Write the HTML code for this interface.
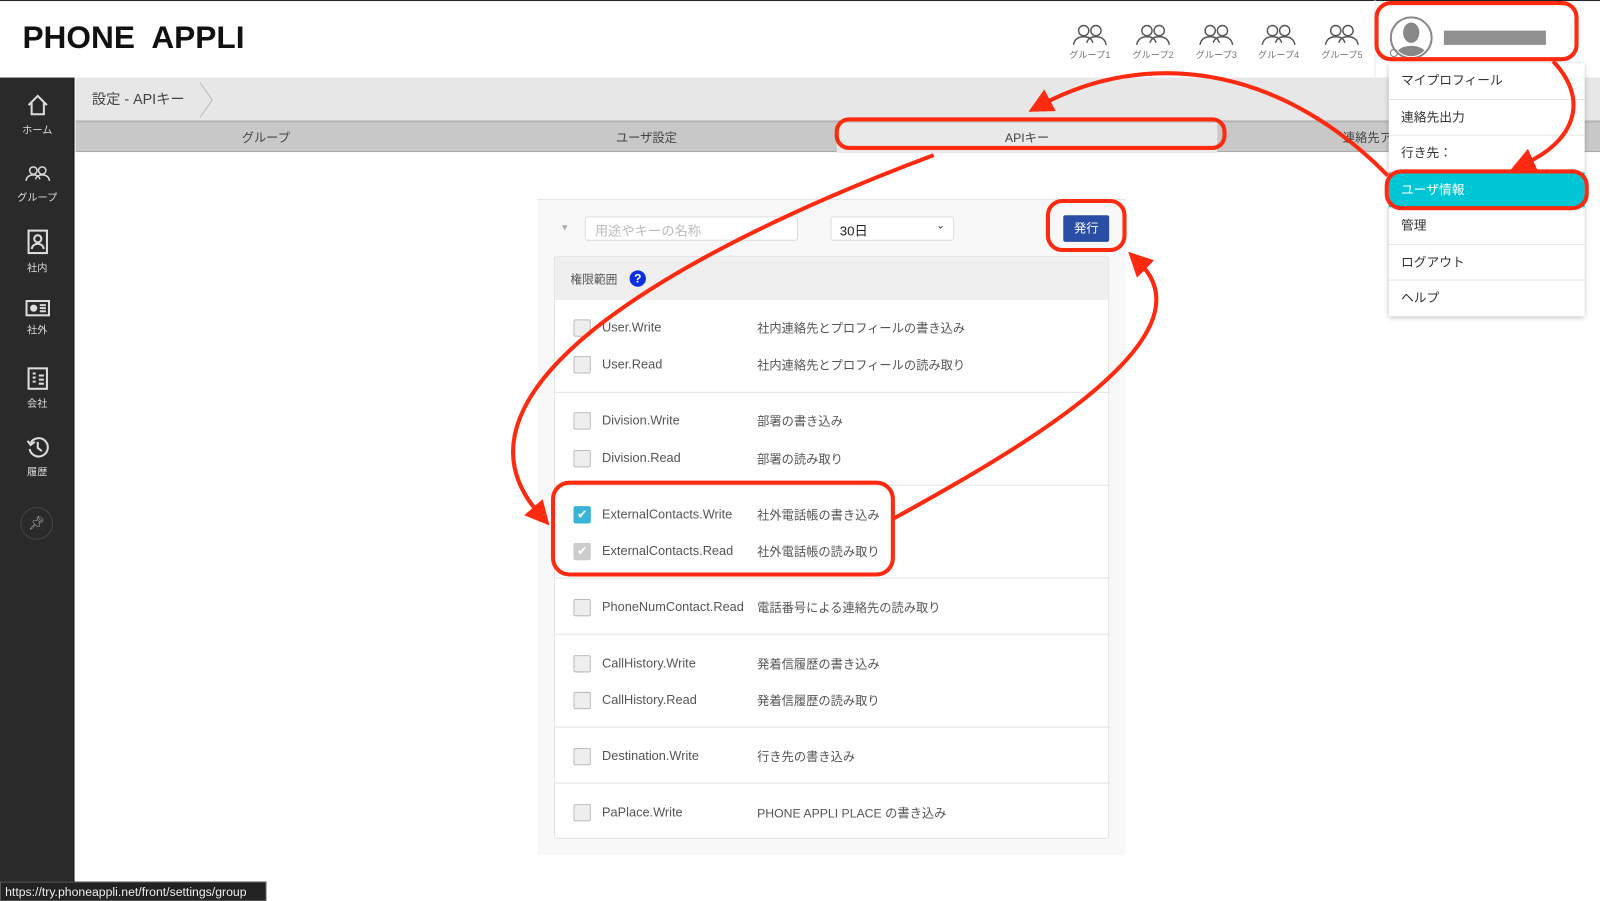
<!DOCTYPE html>
<html><head><meta charset="utf-8"><style>
*{margin:0;padding:0;box-sizing:border-box}
html,body{width:1600px;height:901px;overflow:hidden;background:#fff}
body{font-family:"Liberation Sans","Noto Sans CJK JP",sans-serif;color:#444}
#w{position:absolute;left:0;top:0;width:1568px;height:883px;transform:scale(1.020408);transform-origin:0 0;background:#fff}
.a{position:absolute}
.sb{left:0;top:76px;width:73px;height:807px;background:#2a2a2a;border-right:1px solid #111}
.si{position:absolute;left:0;width:73px;text-align:center;color:#ddd;font-size:10px}
.si svg{display:block;margin:0 auto 4px}
.tab{position:absolute;top:0;height:30px;line-height:30px;font-size:12px;color:#444;text-align:center;width:373px}
.grp{position:absolute;top:22px;width:50px;text-align:center;font-size:9px;color:#777}
.grp svg{display:block;margin:0 auto 1px}
.dd{left:1361px;top:62px;width:192px;height:248px;background:#fff;box-shadow:0 1px 5px rgba(0,0,0,.3)}
.di{height:35.5px;line-height:35px;padding-left:12px;font-size:12.5px;color:#333;border-bottom:1px solid #e5e5e5}
.row{position:absolute;left:0;width:544px;font-size:12.5px;color:#555}
.cb{position:absolute;left:18px;top:0px;width:17px;height:17px;border:1.5px solid #bbb;border-radius:2px;background:#eee}
.lb{position:absolute;left:46px;top:1px}
.ds{position:absolute;left:198px;top:0px;font-size:12px;color:#555}
.sep{position:absolute;left:0;width:544px;height:1px;background:#e3e3e3}
</style></head><body><div id="w">
<div class="a" style="left:0;top:0;width:1568px;height:1px;background:#222"></div>
<div class="a" style="left:22px;top:19px;font-size:31px;font-weight:bold;color:#111">PHONE&nbsp; APPLI</div>
<div class="grp" style="left:1043px"><svg width="36" height="24" viewBox="0 0 36 24" fill="none" stroke="#555" stroke-width="1.4"><circle cx="12" cy="8" r="5"/><circle cx="24" cy="8" r="5"/><path d="M2 22c1-6 5-8 10-8s8 2 9 6M15 20c1-4 4-6 9-6s9 2 10 8"/></svg>グループ1</div>
<div class="grp" style="left:1105px"><svg width="36" height="24" viewBox="0 0 36 24" fill="none" stroke="#555" stroke-width="1.4"><circle cx="12" cy="8" r="5"/><circle cx="24" cy="8" r="5"/><path d="M2 22c1-6 5-8 10-8s8 2 9 6M15 20c1-4 4-6 9-6s9 2 10 8"/></svg>グループ2</div>
<div class="grp" style="left:1167px"><svg width="36" height="24" viewBox="0 0 36 24" fill="none" stroke="#555" stroke-width="1.4"><circle cx="12" cy="8" r="5"/><circle cx="24" cy="8" r="5"/><path d="M2 22c1-6 5-8 10-8s8 2 9 6M15 20c1-4 4-6 9-6s9 2 10 8"/></svg>グループ3</div>
<div class="grp" style="left:1228px"><svg width="36" height="24" viewBox="0 0 36 24" fill="none" stroke="#555" stroke-width="1.4"><circle cx="12" cy="8" r="5"/><circle cx="24" cy="8" r="5"/><path d="M2 22c1-6 5-8 10-8s8 2 9 6M15 20c1-4 4-6 9-6s9 2 10 8"/></svg>グループ4</div>
<div class="grp" style="left:1290px"><svg width="36" height="24" viewBox="0 0 36 24" fill="none" stroke="#555" stroke-width="1.4"><circle cx="12" cy="8" r="5"/><circle cx="24" cy="8" r="5"/><path d="M2 22c1-6 5-8 10-8s8 2 9 6M15 20c1-4 4-6 9-6s9 2 10 8"/></svg>グループ5</div>
<div class="a" style="left:1347px;top:0;width:1px;height:76px;background:#e5e5e5"></div>
<svg class="a" style="left:1361px;top:15px" width="46" height="46" viewBox="0 0 46 46"><circle cx="22" cy="22" r="20" fill="#fff" stroke="#888" stroke-width="2"/><clipPath id="c"><circle cx="22" cy="22" r="18"/></clipPath><g clip-path="url(#c)" fill="#888"><ellipse cx="22" cy="17" rx="8" ry="10"/><path d="M4 44c2-10 9-14 18-14s16 4 18 14z"/></g><circle cx="5" cy="37" r="3.5" fill="none" stroke="#888" stroke-width="1.2"/></svg>
<div class="a" style="left:1415px;top:30px;width:100px;height:14px;background:#909090"></div>
<div class="a sb"></div>
<div class="si" style="top:91px"><svg width="24" height="24" viewBox="0 0 24 24" fill="none" stroke="#ddd" stroke-width="2"><path d="M3 12L12 3l9 9M6 10v11h12V10"/></svg>ホーム</div>
<div class="si" style="top:159px"><svg width="26" height="22" viewBox="0 0 36 24" fill="none" stroke="#ddd" stroke-width="2"><circle cx="12" cy="8" r="5"/><circle cx="24" cy="8" r="5"/><path d="M2 22c1-6 5-8 10-8s8 2 9 6M15 20c1-4 4-6 9-6s9 2 10 8"/></svg>グループ</div>
<div class="si" style="top:224px"><svg width="22" height="26" viewBox="0 0 22 26" fill="none" stroke="#ddd" stroke-width="2"><rect x="2" y="2" width="18" height="22"/><circle cx="11" cy="10" r="3.5"/><path d="M5 20c1-4 3-5 6-5s5 1 6 5"/></svg>社内</div>
<div class="si" style="top:293px"><svg width="24" height="18" viewBox="0 0 24 18" fill="none" stroke="#ddd" stroke-width="2"><rect x="1" y="2" width="22" height="14"/><circle cx="8" cy="9" r="2.5" fill="#ddd"/><path d="M14 6h6M14 9h6M14 12h6"/></svg>社外</div>
<div class="si" style="top:359px"><svg width="22" height="24" viewBox="0 0 22 24" fill="none" stroke="#ddd" stroke-width="2"><rect x="2" y="2" width="18" height="20"/><path d="M6 7h3M6 11h3M6 15h3M12 9h5M12 13h5M12 17h5"/></svg>会社</div>
<div class="si" style="top:426px"><svg width="24" height="24" viewBox="0 0 24 24" fill="none" stroke="#ddd" stroke-width="2"><path d="M5 8a9 9 0 1 1-1 6"/><path d="M2 6l3 4 4-3"/><path d="M12 7v6l4 3"/></svg>履歴</div>
<div class="a" style="left:20px;top:497px;width:32px;height:32px;border-radius:50%;border:1px solid #444;color:#aaa;font-size:13px;text-align:center;line-height:30px">📌︎</div>
<div class="a" style="left:74px;top:76px;width:1494px;height:42px;background:#e7e7e7"></div>
<div class="a" style="left:90px;top:87px;font-size:14px;color:#444">設定 - APIキー</div>
<svg class="a" style="left:194px;top:80px" width="16" height="36"><path d="M2 1l12 17L2 35" fill="none" stroke="#bbb"/></svg>
<div class="a" style="left:74px;top:118px;width:1494px;height:31px;background:#c8c8c8;border-top:2px solid #b5b5b5;border-bottom:1px solid #aaa">
<div class="tab" style="left:0">グループ</div><div class="tab" style="left:373px">ユーザ設定</div><div class="tab" style="left:746px;background:#e9e9e9">APIキー</div><div class="tab" style="left:1242px;text-align:left">連絡先アクセス</div></div>
<div class="a" style="left:527px;top:195px;width:576px;height:643px;background:#f8f8f8;border-top:1px solid #e5e5e5"></div>
<div class="a" style="left:549px;top:218px;font-size:9px;color:#aaa">▼</div>
<div class="a" style="left:573px;top:212px;width:209px;height:24px;background:#fff;border:1px solid #ddd;border-radius:3px;font-size:13px;color:#bbb;padding:3px 9px">用途やキーの名称</div>
<div class="a" style="left:814px;top:212px;width:121px;height:24px;background:#fff;border:1px solid #ddd;border-radius:3px;font-size:13px;color:#222;padding:3px 8px">30日<span style="position:absolute;right:8px;top:3px;font-size:10px">⌄</span></div>
<div class="a" style="left:1042px;top:211px;width:45px;height:26px;background:#2a4da5;border-radius:2px;color:#fff;font-size:12px;text-align:center;line-height:26px">発行</div>
<div class="a" style="left:543px;top:251px;width:544px;height:571px;background:#fff;border:1px solid #e3e3e3;border-radius:2px">
<div style="position:absolute;left:0;top:0;width:542px;height:42px;background:#efefef"></div>
<div style="position:absolute;left:15px;top:14px;font-size:11.5px;color:#555">権限範囲</div>
<div style="position:absolute;left:73px;top:13px;width:16px;height:16px;border-radius:50%;background:#0b2fe0;color:#fff;font-size:12px;font-weight:bold;text-align:center;line-height:16px">?</div>
<div class="row" style="top:61px"><div class="cb"></div><span class="lb">User.Write</span><span class="ds">社内連絡先とプロフィールの書き込み</span></div>
<div class="row" style="top:97px"><div class="cb"></div><span class="lb">User.Read</span><span class="ds">社内連絡先とプロフィールの読み取り</span></div>
<div class="sep" style="top:132px"></div>
<div class="row" style="top:152px"><div class="cb"></div><span class="lb">Division.Write</span><span class="ds">部署の書き込み</span></div>
<div class="row" style="top:189px"><div class="cb"></div><span class="lb">Division.Read</span><span class="ds">部署の読み取り</span></div>
<div class="sep" style="top:223px"></div>
<div class="row" style="top:244px"><div class="cb" style="background:#39b3d7;border-color:#39b3d7;color:#fff;font-size:12px;line-height:14px;text-align:center">✔</div><span class="lb">ExternalContacts.Write</span><span class="ds">社外電話帳の書き込み</span></div>
<div class="row" style="top:280px"><div class="cb" style="background:#ccc;border-color:#ccc;color:#fff;font-size:12px;line-height:14px;text-align:center">✔</div><span class="lb">ExternalContacts.Read</span><span class="ds">社外電話帳の読み取り</span></div>
<div class="sep" style="top:314px"></div>
<div class="row" style="top:335px"><div class="cb"></div><span class="lb">PhoneNumContact.Read</span><span class="ds">電話番号による連絡先の読み取り</span></div>
<div class="sep" style="top:369px"></div>
<div class="row" style="top:390px"><div class="cb"></div><span class="lb">CallHistory.Write</span><span class="ds">発着信履歴の書き込み</span></div>
<div class="row" style="top:426px"><div class="cb"></div><span class="lb">CallHistory.Read</span><span class="ds">発着信履歴の読み取り</span></div>
<div class="sep" style="top:460px"></div>
<div class="row" style="top:481px"><div class="cb"></div><span class="lb">Destination.Write</span><span class="ds">行き先の書き込み</span></div>
<div class="sep" style="top:515px"></div>
<div class="row" style="top:536px"><div class="cb"></div><span class="lb">PaPlace.Write</span><span class="ds">PHONE APPLI PLACE の書き込み</span></div>
</div>
<div class="a dd">
<div class="di">マイプロフィール</div><div class="di">連絡先出力</div><div class="di">行き先：</div><div class="di" style="background:#00c6d6;color:#fff">ユーザ情報</div><div class="di">管理</div><div class="di">ログアウト</div><div class="di" style="border:none">ヘルプ</div></div>
<div class="a" style="left:0;top:864px;width:261px;height:19px;background:#222;border:1px solid #555;color:#eee;font-size:12px;padding:2px 4px">https://try.phoneappli.net/front/settings/group</div>
<svg class="a" style="left:0;top:0" width="1568" height="883" viewBox="0 0 1568 883" fill="none">
<defs><marker id="m" markerWidth="6" markerHeight="6" refX="2" refY="3" orient="auto"><path d="M0 0L6 3L0 6z" fill="#ff2a0f"/></marker></defs>
<g stroke="#ff2a0f" stroke-width="4">
<rect x="1349" y="3" width="196" height="55" rx="14"/>
<rect x="1359" y="168" width="196" height="36" rx="14"/>
<rect x="820" y="117" width="380" height="28" rx="12"/>
<rect x="1027" y="197" width="75" height="48" rx="14"/>
<rect x="542" y="473" width="333" height="90" rx="16"/>
<path d="M1522 60C1560 100 1540 140 1495 160" marker-end="url(#m)"/>
<path d="M1360 172C1250 60 1120 50 1022 102" marker-end="url(#m)"/>
<path d="M915 152C680 240 420 380 528 503" marker-end="url(#m)"/>
<path d="M876 508C1000 440 1190 330 1117 258" marker-end="url(#m)"/>
</g></svg>
</div></body></html>
